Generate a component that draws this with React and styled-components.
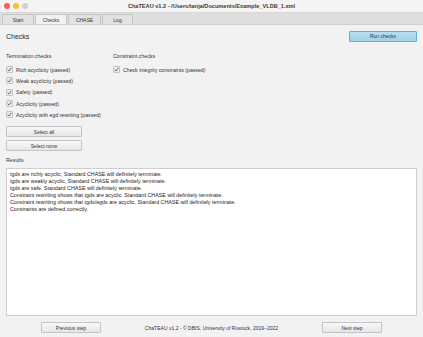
import React from "react";
import styled, { createGlobalStyle } from "styled-components";

const Global = createGlobalStyle`
  html, body { margin: 0; padding: 0; background: #f2f2f2; }
  body { font-family: "Liberation Sans", Arial, sans-serif; color: #222; }
  * { box-sizing: border-box; }
`;

const Window = styled.div`
  width: 423px;
  height: 337px;
  display: flex;
  flex-direction: column;
  background: #f2f2f2;
  overflow: hidden;
`;

const TitleBar = styled.div`
  height: 13px;
  flex: none;
  display: flex;
  align-items: center;
  position: relative;
  background: #f4f4f4;
  border-bottom: 1px solid #d8d8d8;
`;

const Lights = styled.div`
  display: flex;
  gap: 3px;
  padding-left: 4px;
`;

const Light = styled.span`
  width: 6px;
  height: 6px;
  border-radius: 50%;
  background: ${(p) => p.$c};
`;

const Title = styled.div`
  position: absolute;
  left: 0;
  right: 0;
  text-align: center;
  font-size: 5.6px;
  font-weight: bold;
  color: #3a3a3a;
`;

const TabBar = styled.div`
  height: 12px;
  flex: none;
  display: flex;
  align-items: stretch;
  padding-left: 2px;
  background: #dedede;
  border-bottom: 1px solid #cfcfcf;
`;

const Tab = styled.div`
  width: ${(p) => p.$w}px;
  display: flex;
  align-items: center;
  justify-content: center;
  font-size: 5px;
  color: #333;
  background: ${(p) => (p.$active ? "#f2f2f2" : "#e2e2e2")};
  border: 1px solid #c6c6c6;
  border-bottom: none;
  margin-right: 1px;
  margin-top: 1px;
`;

const Content = styled.div`
  flex: 1;
  display: flex;
  flex-direction: column;
  padding: 5px 6px 0 6px;
  min-height: 0;
`;

const HeaderRow = styled.div`
  display: flex;
  justify-content: space-between;
  align-items: center;
  height: 12px;
`;

const H1 = styled.div`
  font-size: 7px;
  color: #2a2a2a;
`;

const Button = styled.div`
  width: ${(p) => p.$w}px;
  height: ${(p) => p.$h || 11}px;
  display: flex;
  align-items: center;
  justify-content: center;
  font-size: 5px;
  color: #333;
  border: 1px solid ${(p) => (p.$primary ? "#55b4d9" : "#c4c4c4")};
  background: ${(p) =>
    p.$primary
      ? "linear-gradient(#b3dff0, #9fd2e8)"
      : "linear-gradient(#f8f8f8, #e6e6e6)"};
  border-radius: 1px;
`;

const Columns = styled.div`
  display: flex;
  margin-top: 11px;
`;

const Column = styled.div`
  width: ${(p) => p.$w}px;
  display: flex;
  flex-direction: column;
`;

const SectionLabel = styled.div`
  font-size: 5.3px;
  color: #333;
  height: 7px;
  line-height: 7px;
  margin-bottom: 4px;
`;

const CheckRow = styled.div`
  display: flex;
  align-items: center;
  gap: 3px;
  height: 11.3px;
  font-size: 5.2px;
  color: #333;
`;

const Box = styled.span`
  width: 7px;
  height: 7px;
  flex: none;
  border: 1px solid #c4c4c4;
  background: #e9e9e9;
  border-radius: 1px;
  display: flex;
  align-items: center;
  justify-content: center;
`;

const ButtonStack = styled.div`
  display: flex;
  flex-direction: column;
  gap: 3px;
  margin-top: 6px;
`;

const ResultsLabel = styled.div`
  font-size: 5.3px;
  color: #333;
  margin-top: 5px;
  height: 8px;
  line-height: 8px;
`;

const ResultsBox = styled.div`
  margin-top: 4px;
  flex: 1;
  width: 411px;
  background: #fff;
  border: 1px solid #cfcfcf;
  padding: 2px 3px;
  font-size: 5.35px;
  line-height: 7px;
  color: #222;
`;

const Footer = styled.div`
  flex: none;
  display: flex;
  align-items: center;
  justify-content: space-between;
  padding: 2px 35px 0 35px;
  height: 21px;
`;

const FooterText = styled.div`
  font-size: 5.05px;
  color: #333;
`;

const Check = () => (
  <Box>
    <svg width="5" height="5" viewBox="0 0 10 10">
      <path d="M1.5 5.5 L4 8 L8.5 1.5" fill="none" stroke="#444" strokeWidth="1.4" />
    </svg>
  </Box>
);

const termination = [
  "Rich acyclicity (passed)",
  "Weak acyclicity (passed)",
  "Safety (passed)",
  "Acyclicity (passed)",
  "Acyclicity with egd rewriting (passed)",
];

const results = [
  "tgds are richly acyclic, Standard CHASE will definitely terminate.",
  "tgds are weakly acyclic, Standard CHASE will definitely terminate.",
  "tgds are safe, Standard CHASE will definitely terminate.",
  "Constraint rewriting shows that tgds are acyclic. Standard CHASE will definitely terminate.",
  "Constraint rewriting shows that tgds/egds are acyclic. Standard CHASE will definitely terminate.",
  "Constraints are defined correctly.",
];

export default function App() {
  return (
    <Window>
      <Global />
      <TitleBar>
        <Lights>
          <Light $c="#fe5f57" />
          <Light $c="#febc2e" />
          <Light $c="#d0d0d0" />
        </Lights>
        <Title>ChaTEAU v1.2 - /Users/tanja/Documents/Example_VLDB_1.xml</Title>
      </TitleBar>
      <TabBar>
        <Tab $w={32}>Start</Tab>
        <Tab $w={32} $active>Checks</Tab>
        <Tab $w={33}>CHASE</Tab>
        <Tab $w={31}>Log</Tab>
      </TabBar>
      <Content>
        <HeaderRow>
          <H1>Checks</H1>
          <Button $primary $w={68} $h={11}>Run checks</Button>
        </HeaderRow>
        <Columns>
          <Column $w={107}>
            <SectionLabel>Termination checks</SectionLabel>
            {termination.map((t) => (
              <CheckRow key={t}>
                <Check />
                {t}
              </CheckRow>
            ))}
            <ButtonStack>
              <Button $w={76}>Select all</Button>
              <Button $w={76}>Select none</Button>
            </ButtonStack>
          </Column>
          <Column $w={200}>
            <SectionLabel>Constraint checks</SectionLabel>
            <CheckRow>
              <Check />
              Check integrity constraints (passed)
            </CheckRow>
          </Column>
        </Columns>
        <ResultsLabel>Results</ResultsLabel>
        <ResultsBox>
          {results.map((r) => (
            <div key={r}>{r}</div>
          ))}
        </ResultsBox>
        <Footer>
          <Button $w={60}>Previous step</Button>
          <FooterText>ChaTEAU v1.2 - © DBIS, University of Rostock, 2019–2022</FooterText>
          <Button $w={60}>Next step</Button>
        </Footer>
      </Content>
    </Window>
  );
}
